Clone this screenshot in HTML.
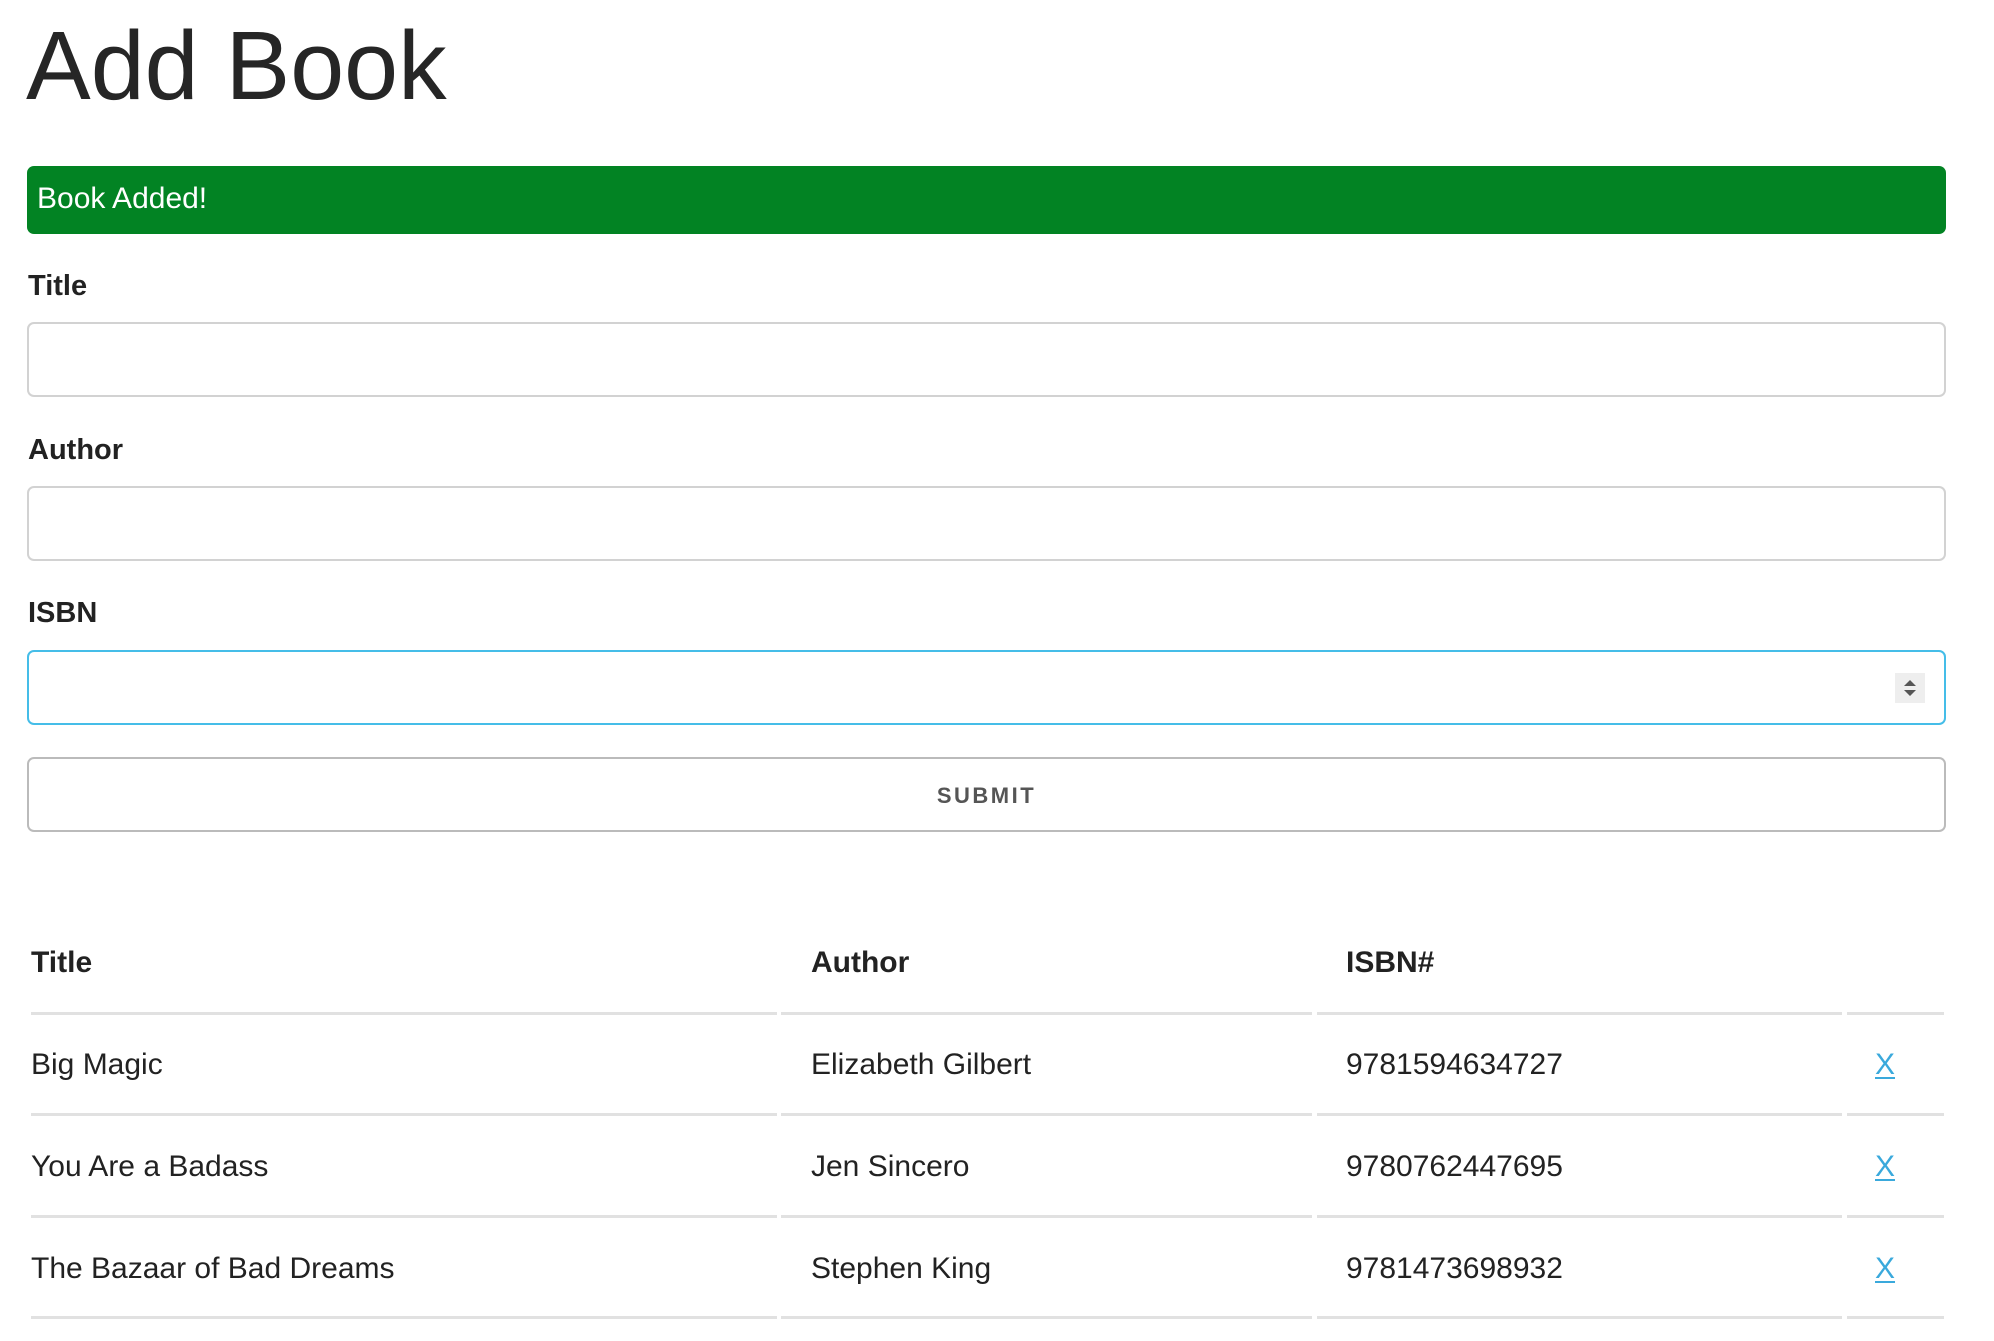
<!DOCTYPE html>
<html><head><meta charset="utf-8"><style>
body{margin:0;width:1994px;height:1341px;background:#fff;font-family:"Liberation Sans",Arial,sans-serif;color:#222;position:relative;overflow:hidden}
.a{position:absolute;line-height:1;white-space:nowrap}
.inp{position:absolute;left:27px;width:1915px;height:71px;border:2px solid #d2d2d2;border-radius:7px;box-sizing:content-box}
.lbl{font-size:29px;font-weight:bold;left:28px}
.t{font-size:30px}
.b{font-weight:bold}
.ln{position:absolute;height:3px;background:#e1e1e1}
.x{color:#3aa9dc;text-decoration:underline;text-decoration-thickness:2px;text-underline-offset:3px}
</style></head><body>
<div class="a" style="left:26px;top:17px;font-size:97px;color:#262626">Add Book</div>
<div style="position:absolute;left:27px;top:166px;width:1919px;height:68px;background:#028323;border-radius:7px"></div>
<div class="a" style="left:37px;top:184px;font-size:30px;color:#fff">Book Added!</div>

<div class="a lbl" style="top:272px">Title</div>
<div class="inp" style="top:322px"></div>
<div class="a lbl" style="top:436px">Author</div>
<div class="inp" style="top:486px"></div>
<div class="a lbl" style="top:599px">ISBN</div>
<div class="inp" style="top:650px;border-color:#45bde8"></div>
<div style="position:absolute;left:1895px;top:673px;width:30px;height:30px;background:#eee"></div>
<svg style="position:absolute;left:1895px;top:673px" width="30" height="30"><path d="M9 13 L15 7 L21 13Z M9 17 L15 23 L21 17Z" fill="#555"/></svg>
<div class="inp" style="top:757px;border-color:#bbb"></div>
<div class="a b" style="left:27px;width:1919px;text-align:center;top:785px;font-size:22px;color:#555;letter-spacing:2.5px">SUBMIT</div>

<div class="a t b" style="left:31px;top:948px">Title</div>
<div class="a t b" style="left:811px;top:948px">Author</div>
<div class="a t b" style="left:1346px;top:948px">ISBN#</div>

<div class="a t" style="left:31px;top:1050px">Big Magic</div>
<div class="a t" style="left:811px;top:1050px">Elizabeth Gilbert</div>
<div class="a t" style="left:1346px;top:1050px">9781594634727</div>
<div class="a t x" style="left:1875px;top:1050px">X</div>

<div class="a t" style="left:31px;top:1152px">You Are a Badass</div>
<div class="a t" style="left:811px;top:1152px">Jen Sincero</div>
<div class="a t" style="left:1346px;top:1152px">9780762447695</div>
<div class="a t x" style="left:1875px;top:1152px">X</div>

<div class="a t" style="left:31px;top:1254px">The Bazaar of Bad Dreams</div>
<div class="a t" style="left:811px;top:1254px">Stephen King</div>
<div class="a t" style="left:1346px;top:1254px">9781473698932</div>
<div class="a t x" style="left:1875px;top:1254px">X</div>

<div style="position:absolute;left:0;top:0">
<div class="ln" style="left:31px;width:746px;top:1012px"></div><div class="ln" style="left:781px;width:531px;top:1012px"></div><div class="ln" style="left:1317px;width:525px;top:1012px"></div><div class="ln" style="left:1847px;width:97px;top:1012px"></div>
<div class="ln" style="left:31px;width:746px;top:1113px"></div><div class="ln" style="left:781px;width:531px;top:1113px"></div><div class="ln" style="left:1317px;width:525px;top:1113px"></div><div class="ln" style="left:1847px;width:97px;top:1113px"></div>
<div class="ln" style="left:31px;width:746px;top:1215px"></div><div class="ln" style="left:781px;width:531px;top:1215px"></div><div class="ln" style="left:1317px;width:525px;top:1215px"></div><div class="ln" style="left:1847px;width:97px;top:1215px"></div>
<div class="ln" style="left:31px;width:746px;top:1316px"></div><div class="ln" style="left:781px;width:531px;top:1316px"></div><div class="ln" style="left:1317px;width:525px;top:1316px"></div><div class="ln" style="left:1847px;width:97px;top:1316px"></div>
</div>
</body></html>
